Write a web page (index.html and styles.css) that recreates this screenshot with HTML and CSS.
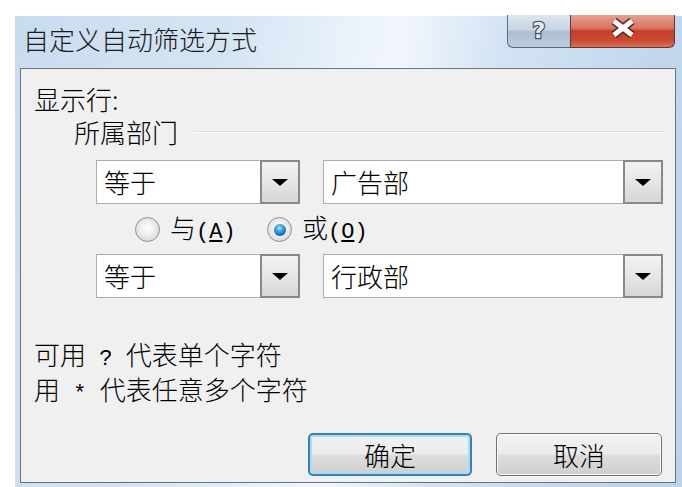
FILE: index.html
```html
<!DOCTYPE html>
<html lang="zh">
<head>
    <meta charset="UTF-8">
    <title>自定义自动筛选方式</title>
    <link rel="stylesheet" href="styles.css">
</head>
<body>
    <div class="window">
        <div class="titlebar">
            <div class="title">自定义自动筛选方式</div>
            <div class="caption">
                <div class="btn-help">
                    <svg width="30" height="30" viewBox="0 0 30 30">
                        <text x="15" y="23" text-anchor="middle" class="help-glyph">?</text>
                    </svg>
                </div>
                <div class="btn-close">
                    <svg width="28" height="22" viewBox="0 0 28 22">
                        <g stroke="#5b2a22" stroke-width="8">
                            <line x1="5" y1="4" x2="23" y2="18"/>
                            <line x1="23" y1="4" x2="5" y2="18"/>
                        </g>
                        <g stroke="#ffffff" stroke-width="5">
                            <line x1="5" y1="4" x2="23" y2="18"/>
                            <line x1="23" y1="4" x2="5" y2="18"/>
                        </g>
                    </svg>
                </div>
            </div>
        </div>

        <div class="client">
            <div class="label">显示行:</div>

            <div class="group-head">
                <span>所属部门</span>
                <div class="group-line"></div>
            </div>

            <div class="combo-row">
                <div class="combo combo-op">
                    <span class="combo-text">等于</span>
                    <span class="combo-btn"><i class="arrow"></i></span>
                </div>
                <div class="combo combo-value">
                    <span class="combo-text">广告部</span>
                    <span class="combo-btn"><i class="arrow"></i></span>
                </div>
            </div>

            <div class="radios">
                <div class="option option-and">
                    <span class="radio"></span>
                    <span>与<span class="mono">(<u>A</u>)</span></span>
                </div>
                <div class="option">
                    <span class="radio checked"><i class="dot"></i></span>
                    <span>或<span class="mono">(<u>O</u>)</span></span>
                </div>
            </div>

            <div class="combo-row row-second">
                <div class="combo combo-op">
                    <span class="combo-text">等于</span>
                    <span class="combo-btn"><i class="arrow"></i></span>
                </div>
                <div class="combo combo-value">
                    <span class="combo-text">行政部</span>
                    <span class="combo-btn"><i class="arrow"></i></span>
                </div>
            </div>

            <div class="hints">
                <div>可用<span class="mono"> ? </span>代表单个字符</div>
                <div>用<span class="mono"> * </span>代表任意多个字符</div>
            </div>

            <div class="actions">
                <button class="btn btn-default">确定</button>
                <button class="btn">取消</button>
            </div>
        </div>
    </div>
</body>
</html>
```

FILE: styles.css
```css
body {
    margin: 0;
    width: 682px;
    height: 487px;
    overflow: hidden;
    background: #ffffff;
    font-family: "Noto Sans CJK SC", sans-serif;
    color: #000000;
}

.window {
    margin: 16px 0 0 15px;
    height: 471px;
    box-sizing: border-box;
    padding: 0 6px 4px 5px;
    display: flex;
    flex-direction: column;
    background: linear-gradient(100deg, #c9dcef 0%, #d6e5f4 30%, #eaf2fa 45%, #f1f6fb 52%, #d3e3f3 66%, #c3d8ee 85%, #bcd3ea 100%);
}

.titlebar {
    height: 52px;
    display: flex;
    align-items: flex-start;
}

.title {
    margin: 8px 0 0 3px;
    font-size: 26px;
    line-height: 30px;
    font-weight: 300;
    color: #1a1a1a;
}

.caption {
    margin: -1px 1px 0 auto;
    height: 33px;
    display: flex;
}

.btn-help {
    width: 63px;
    box-sizing: border-box;
    border: 1px solid #5e6a78;
    border-top: none;
    border-right: none;
    border-radius: 0 0 0 6px;
    background: linear-gradient(#dde6ef, #c8d5e3 45%, #aebfd2 52%, #bccddf);
    display: flex;
    justify-content: center;
    align-items: flex-start;
}

.help-glyph {
    font-family: "DejaVu Sans", sans-serif;
    font-size: 22px;
    font-weight: bold;
    fill: #e4eaf1;
    stroke: #4a5562;
    stroke-width: 2.5;
    paint-order: stroke;
}

.btn-close {
    width: 105px;
    box-sizing: border-box;
    border: 1px solid #5d3a35;
    border-top: none;
    border-radius: 0 0 6px 0;
    background: linear-gradient(#e7a090, #d9735d 42%, #c63d27 50%, #cc4a32 80%, #dc7259);
    display: flex;
    justify-content: center;
    align-items: flex-start;
    padding-top: 2px;
}

.client {
    flex: 1;
    border: 1px solid #66737f;
    background: #f0f0f0;
    padding: 17px 11px 0 13px;
    font-size: 26px;
    line-height: 26px;
    font-weight: 300;
}

.mono {
    font-family: "Liberation Mono", monospace;
    font-size: 22px;
    white-space: pre;
}

.group-head {
    margin: 7px 0 0 40px;
    display: flex;
    align-items: center;
    gap: 16px;
}

.group-line {
    flex: 1;
    height: 1px;
    background: #d5dde4;
    border-bottom: 1px solid #ffffff;
}

.combo-row {
    margin: 15px 0 0 62px;
    display: flex;
    gap: 23px;
}

.row-second {
    margin-top: 12px;
}

.combo {
    height: 44px;
    box-sizing: border-box;
    border: 1px solid #abadb3;
    background: #ffffff;
    display: flex;
}

.combo-op {
    width: 204px;
}

.combo-value {
    width: 340px;
}

.combo-text {
    flex: 1;
    padding-left: 7px;
    line-height: 42px;
}

.combo-btn {
    width: 40px;
    margin: -1px -1px -1px 0;
    box-sizing: border-box;
    border: 2px solid #858a90;
    background: linear-gradient(#f3f3f3, #e6e6e6 50%, #d6d6d6);
    display: flex;
    justify-content: center;
    align-items: center;
}

.arrow {
    width: 0;
    height: 0;
    border-left: 8px solid transparent;
    border-right: 8px solid transparent;
    border-top: 7px solid #000000;
}

.radios {
    margin: 13px 0 0 101px;
    height: 25px;
    display: flex;
    align-items: center;
}

.option {
    display: flex;
    align-items: center;
    gap: 10px;
}

.option-and {
    width: 132px;
}

.radio {
    width: 25px;
    height: 25px;
    box-sizing: border-box;
    border-radius: 50%;
    border: 1px solid #8e9196;
    background: radial-gradient(circle at 50% 45%, #fdfdfd 0, #f1f1f1 35%, #d9dadc 75%, #ebebeb 100%);
    display: flex;
    justify-content: center;
    align-items: center;
}

.dot {
    width: 12px;
    height: 12px;
    border-radius: 50%;
    background: radial-gradient(circle at 45% 35%, #bfe6ff 0, #3a9ee8 35%, #0d5fb4 75%, #0a3f7e 100%);
}

.hints {
    margin-top: 41px;
    line-height: 29px;
}

.actions {
    margin: 24px 2px 0 0;
    display: flex;
    justify-content: flex-end;
    gap: 24px;
}

.btn {
    width: 166px;
    height: 43px;
    border: 1px solid #707070;
    border-radius: 5px;
    background: linear-gradient(#f3f3f3, #ebebeb 48%, #dddddd 52%, #cfcfcf);
    box-shadow: inset 0 0 0 1px #fbfbfb;
    font-family: "Noto Sans CJK SC", sans-serif;
    font-size: 26px;
    font-weight: 300;
    color: #000000;
    padding: 0;
}

.btn-default {
    width: 164px;
    border: 2px solid #3c7fb1;
    box-shadow: inset 0 0 0 2px #a6def5;
}
```
